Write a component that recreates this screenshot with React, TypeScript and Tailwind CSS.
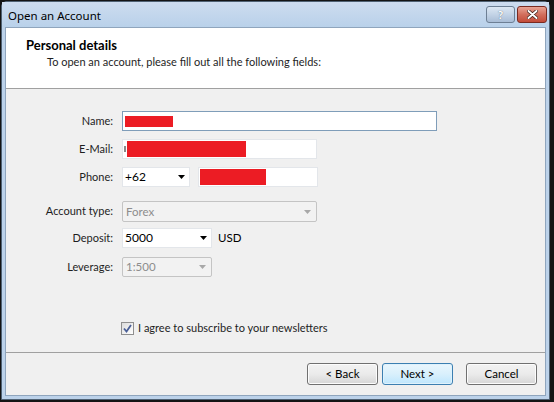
import React from "react";

const font = { fontFamily: 'Lato, "Liberation Sans", sans-serif' };
const titleFont = { fontFamily: '"Noto Sans", "Open Sans", sans-serif' };

function Arrow({ color = "#000" }: { color?: string }) {
  return (
    <svg width="7" height="4" viewBox="0 0 7 4">
      <path d="M0 0H7L3.5 4Z" fill={color} />
    </svg>
  );
}

function Label({ children }: { children: React.ReactNode }) {
  return <div className="w-[108px] shrink-0 pr-[1px] text-right text-[11px] text-[#1e1e1e]">{children}</div>;
}

function Btn({ children, def }: { children: React.ReactNode; def?: boolean }) {
  return (
    <div
      className={
        "flex h-[22px] w-[71px] items-center justify-center rounded-[3px] border text-[11.5px] text-black " +
        (def
          ? "border-[#3c7fb1] bg-gradient-to-b from-[#eaf6fd] via-[#d9f0fc] to-[#bee6fd] shadow-[inset_0_0_0_1px_#dff2fc]"
          : "border-[#707070] bg-gradient-to-b from-[#f2f2f2] via-[#ebebeb] to-[#d6d6d6] shadow-[inset_0_0_0_1px_#fcfcfc]")
      }
    >
      {children}
    </div>
  );
}

export default function App() {
  return (
    <div className="h-[402px] w-[554px] overflow-hidden bg-[#141414] pl-[1px] pt-[1px]" style={font}>
      <div className="flex h-[399px] w-[549px] flex-col rounded-t-[6px] border border-[#4f6173] bg-[#bcd2ea]">
        {/* title bar */}
        <div className="flex h-[25px] shrink-0 items-center bg-gradient-to-b from-[#cddcef] to-[#b9d1ea] pl-[6px] pr-[2px]">
          <div className="flex-1 pt-[2px] text-[11.5px] text-black" style={titleFont}>
            Open an Account
          </div>
          <div className="flex items-start gap-[2px] self-start pt-[4px]">
            <div className="flex h-[17px] w-[29px] items-center justify-center rounded-[3px] border border-[#6d7f94] bg-gradient-to-b from-[#dce7f3] via-[#c3d3e6] to-[#a9bdd6] text-[12px] font-bold leading-none text-white [text-shadow:0_0_1px_#3a4a5e]">
              ?
            </div>
            <div className="flex h-[17px] w-[30px] items-center justify-center rounded-[3px] border border-[#7a2a20] bg-gradient-to-b from-[#e8a394] via-[#d26f5d] to-[#c24b39]">
              <svg width="11" height="9" viewBox="0 0 11 9">
                <path d="M1.5 1L9.5 8M9.5 1L1.5 8" stroke="#3a1a14" strokeWidth="3.4" strokeLinecap="round" />
                <path d="M1.5 1L9.5 8M9.5 1L1.5 8" stroke="#fff" strokeWidth="2" strokeLinecap="round" />
              </svg>
            </div>
          </div>
        </div>
        {/* client area */}
        <div className="mx-[3px] mb-[3px] flex flex-1 flex-col border border-[#8fa5bd] bg-[#f0f0f0]">
          {/* header */}
          <div className="h-[61px] shrink-0 border-b border-[#a0a0a0] bg-white">
            <div className="pl-[20px] pt-[9px] text-[13px] font-bold leading-[16px] text-black">Personal details</div>
            <div className="mt-[1px] pl-[41px] text-[11px] leading-[16px] text-[#1e1e1e]">
              To open an account, please fill out all the following fields:
            </div>
          </div>
          {/* body */}
          <div className="flex flex-1 flex-col pt-[22px]">
            <div className="flex h-[20px] items-center gap-[8px]">
              <Label>Name:</Label>
              <div className="flex h-[20px] w-[315px] items-center border border-[#7f9db9] bg-white pl-[2px]">
                <div className="h-[11px] w-[48px] bg-[#ec1c24]" />
              </div>
            </div>
            <div className="mt-[8px] flex h-[20px] items-center gap-[8px]">
              <Label>E-Mail:</Label>
              <div className="flex h-[20px] w-[195px] items-center border border-[#e3e6ea] bg-white pl-[1px]">
                <div className="mr-[1px] h-[6px] w-[2px] bg-[#8a8a8a]" />
                <div className="h-[16px] w-[119px] bg-[#ec1c24]" />
              </div>
            </div>
            <div className="mt-[8px] flex h-[20px] items-center gap-[8px]">
              <Label>Phone:</Label>
              <div className="flex h-[20px] w-[68px] items-center justify-between border border-[#e3e6ea] bg-white pl-[2px] pr-[4px] text-[12px] text-black">
                <span>+62</span>
                <Arrow />
              </div>
              <div className="flex h-[20px] w-[120px] items-center border border-[#e3e6ea] bg-white pl-[1px]">
                <div className="h-[16px] w-[66px] bg-[#ec1c24]" />
              </div>
            </div>
            <div className="mt-[14px] flex h-[21px] items-center gap-[8px]">
              <Label>Account type:</Label>
              <div className="flex h-[21px] w-[195px] items-center justify-between rounded-[2px] border border-[#c4c4c4] bg-[#f2f2f2] pl-[3px] pr-[5px] text-[11.5px] text-[#8d8d8d]">
                <span>Forex</span>
                <Arrow color="#a8a8a8" />
              </div>
            </div>
            <div className="mt-[6px] flex h-[20px] items-center gap-[8px]">
              <Label>Deposit:</Label>
              <div className="flex h-[20px] w-[90px] items-center justify-between border border-[#e3e6ea] bg-white pl-[2px] pr-[4px] text-[12px] text-black">
                <span>5000</span>
                <Arrow />
              </div>
              <span className="-ml-[2px] text-[11.5px] text-black">USD</span>
            </div>
            <div className="mt-[9px] flex h-[20px] items-center gap-[8px]">
              <Label>Leverage:</Label>
              <div className="flex h-[20px] w-[90px] items-center justify-between rounded-[2px] border border-[#c4c4c4] bg-[#f2f2f2] pl-[3px] pr-[5px] text-[11.5px] text-[#8d8d8d]">
                <span>1:500</span>
                <Arrow color="#a8a8a8" />
              </div>
            </div>
            <div className="mt-[43px] flex items-center pl-[115px]">
              <div className="flex h-[13px] w-[13px] items-center justify-center border border-[#8f8f8f] bg-gradient-to-br from-[#dcdcdc] to-[#ffffff]">
                <svg width="9" height="9" viewBox="0 0 9 9">
                  <path d="M1 4.5L3.5 7.5L8 1" stroke="#4a5f97" strokeWidth="1.8" fill="none" />
                </svg>
              </div>
              <span className="ml-[4px] text-[11px] text-[#1e1e1e]">I agree to subscribe to your newsletters</span>
            </div>
          </div>
          {/* footer */}
          <div className="flex h-[43px] shrink-0 items-center border-t border-[#a0a0a0] pb-[1px] pl-[301px]">
            <Btn>&lt; Back</Btn>
            <div className="ml-[4px]">
              <Btn def>Next &gt;</Btn>
            </div>
            <div className="ml-[13px]">
              <Btn>Cancel</Btn>
            </div>
          </div>
        </div>
      </div>
    </div>
  );
}
